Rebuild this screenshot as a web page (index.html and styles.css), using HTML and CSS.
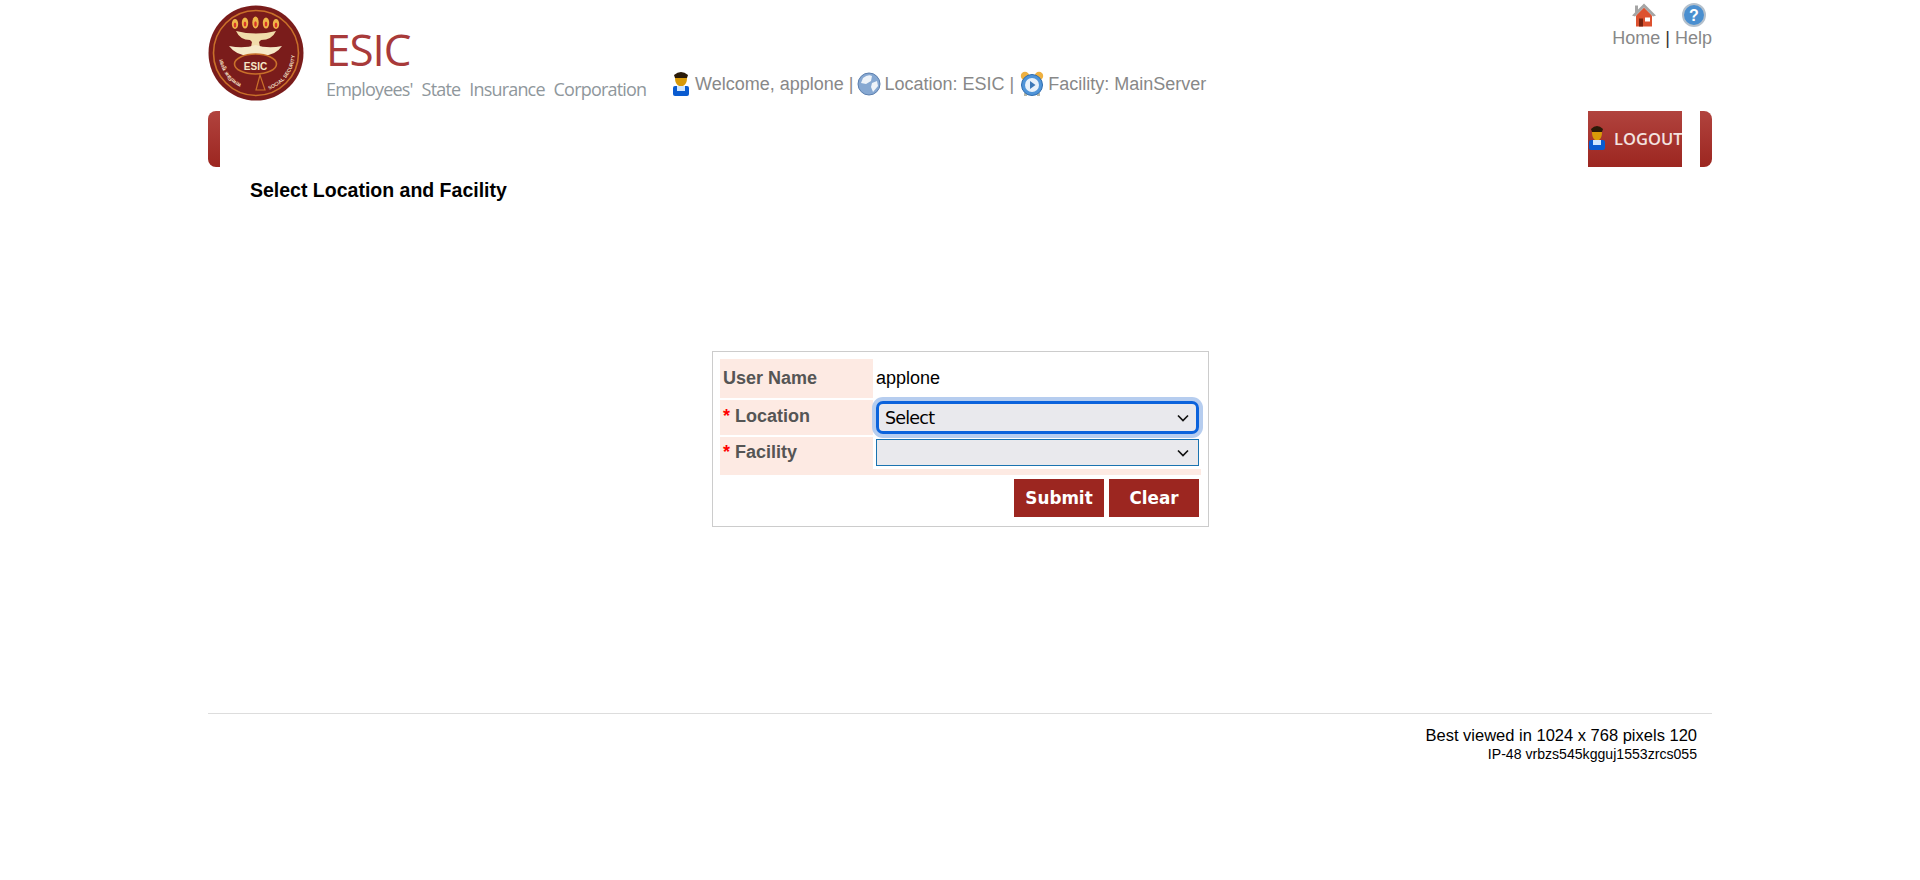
FILE: index.html
```html
<!DOCTYPE html>
<html lang="en">
<head>
<meta charset="utf-8">
<title>Select Location and Facility</title>
<link rel="stylesheet" href="styles.css">
</head>
<body>
<div class="page">
  <header class="header">
    <svg class="seal" viewBox="0 0 96 96" aria-label="ESIC seal">
      <defs>
        <path id="arcL" d="M33.5 78.8 A34 34 0 0 1 15 40"/>
        <path id="arcR" d="M61 84.8 A39 39 0 0 0 84.5 34.5"/>
      </defs>
      <circle cx="48" cy="48" r="47.5" fill="#7a1c1b"/>
      <circle cx="48" cy="48" r="42.5" fill="none" stroke="#c9702a" stroke-width="1.6"/>
      <g fill="#efb648">
        <ellipse cx="27" cy="19" rx="3.2" ry="5"/><ellipse cx="37" cy="18" rx="3.2" ry="5.5"/><ellipse cx="47.5" cy="17.5" rx="3.2" ry="6"/><ellipse cx="58" cy="18" rx="3.2" ry="5.5"/><ellipse cx="68" cy="19" rx="3.2" ry="5"/>
      </g>
      <g fill="#d8342a">
        <ellipse cx="27" cy="20" rx="1.3" ry="2.6"/><ellipse cx="37" cy="19" rx="1.3" ry="2.6"/><ellipse cx="47.5" cy="19" rx="1.3" ry="2.8"/><ellipse cx="58" cy="19" rx="1.3" ry="2.6"/><ellipse cx="68" cy="20" rx="1.3" ry="2.6"/>
      </g>
      <path d="M28 26 Q48 31 68 26 Q64 35 53 35 L51 37 L52 42 L43 42 L44 37 L42 35 Q32 35 28 26Z" fill="#f1dcaa"/>
      <path d="M21 41 Q36 44 47.5 40 Q60 44 74 41 Q66 53 47.5 50 Q30 53 21 41Z" fill="#f6e9c8"/>
      <ellipse cx="47.5" cy="59" rx="21" ry="10" fill="#7a1c1b" stroke="#c9702a" stroke-width="1.6"/>
      <text class="seal-esic" x="47.5" y="65" text-anchor="middle">ESIC</text>
      <path d="M52 70 L48 85 L57 85Z" fill="none" stroke="#c9702a" stroke-width="1.2"/>
      <text class="seal-small"><textPath href="#arcR">SOCIAL SECURITY</textPath></text>
      <text class="seal-small"><textPath href="#arcL">सामाजिक सुरक्षा</textPath></text>
    </svg>
    <div class="brand">
      <div class="brand-name">ESIC</div>
      <div class="brand-sub">Employees' State Insurance Corporation</div>
    </div>
    <div class="info">
      <svg class="ico" viewBox="0 0 24 26"><path d="M5 4 Q12 -2 19 4 L18 7 L6 7Z" fill="#2a1a08"/><path d="M6 7 H18 Q18 13 14 15 H10 Q6 13 6 7Z" fill="#d99a08"/><rect x="4" y="15" width="16" height="10" rx="2" fill="#0a5bd0"/><rect x="8" y="15" width="8" height="5" fill="#cfe6ff"/></svg>
      <span class="info-welcome">Welcome, applone |</span>
      <svg class="ico" viewBox="0 0 24 24"><circle cx="12" cy="12" r="11" fill="#86a8d2" stroke="#5c7fae"/><path d="M6 6 Q11 2 15 4 L14 9 L9 12 L4 11Z M15 11 L20 9 L21 14 L16 20 L14 15Z" fill="#eef3f9"/></svg>
      <span class="info-location">Location: ESIC |</span>
      <svg class="ico" viewBox="0 0 24 26"><circle cx="5" cy="5" r="4.2" fill="#eeb040"/><circle cx="19" cy="5" r="4.2" fill="#eeb040"/><rect x="4" y="22" width="3" height="3" fill="#b8b8a8"/><rect x="17" y="22" width="3" height="3" fill="#b8b8a8"/><circle cx="12" cy="14" r="10.5" fill="#4f94d8" stroke="#2f6cae"/><circle cx="12" cy="14" r="7" fill="#e8f1fa"/><path d="M10 10 L15.5 14 L10 18Z" fill="#3c78b8"/></svg>
      <span class="info-facility">Facility: MainServer</span>
    </div>
    <div class="top-links">
      <div class="top-icons">
        <svg class="ico" viewBox="1 1 24 23"><path d="M5 13 L13 5 L21 13 V24 H5Z" fill="#dd5230"/><path d="M13 1 L7 7 V3 H4 V10 L1 13 L4 14 L13 5 L22 14 L25 13Z" fill="#a5a5a5"/><rect x="14" y="15" width="5" height="4" fill="#fff"/><rect x="8" y="16" width="4" height="8" fill="#7a2410"/></svg>
        <svg class="ico" viewBox="0 0 24 24"><circle cx="12" cy="12" r="11" fill="#4a8fd0" stroke="#b4c0cc" stroke-width="2"/><text class="help-mark" x="12" y="18" text-anchor="middle">?</text></svg>
      </div>
      <div class="top-text"><a>Home</a> <b>|</b> <a>Help</a></div>
    </div>
  </header>

  <nav class="menu">
    <span class="cap cap-left"></span>
    <div class="logout">
      <svg class="logout-ico" viewBox="0 0 18 26"><path d="M3 4 Q9 -2 15 4 L14 7 L4 7Z" fill="#2a1a08"/><path d="M4 7 H14 Q14 13 11 15 H7 Q4 13 4 7Z" fill="#d99a08"/><rect x="1" y="15" width="16" height="10" rx="2" fill="#0a5bd0"/><rect x="5" y="15" width="8" height="5" fill="#cfe6ff"/></svg>
      <span>LOGOUT</span>
    </div>
    <span class="cap cap-right"></span>
  </nav>

  <h1 class="title">Select Location and Facility</h1>

  <main class="form-wrap">
    <form class="form-box">
      <div class="row row-user">
        <div class="label">User Name</div>
        <div class="value">applone</div>
      </div>
      <div class="row row-loc">
        <div class="label"><i>*</i> Location</div>
        <div class="value">
          <div class="select select-focus"><span>Select</span><svg class="chev" viewBox="0 0 12 8"><path d="M1 1.5 L6 6.5 L11 1.5" fill="none" stroke="#111" stroke-width="1.7"/></svg></div>
        </div>
      </div>
      <div class="row row-fac">
        <div class="label"><i>*</i> Facility</div>
        <div class="value value-top">
          <div class="select select-plain"><svg class="chev" viewBox="0 0 12 8"><path d="M1 1.5 L6 6.5 L11 1.5" fill="none" stroke="#111" stroke-width="1.7"/></svg></div>
        </div>
      </div>
      <div class="strip"></div>
      <div class="actions">
        <button type="button" class="btn">Submit</button>
        <button type="button" class="btn">Clear</button>
      </div>
    </form>
  </main>

  <footer class="footer">
    <div class="best">Best viewed in 1024 x 768 pixels 120</div>
    <div class="ip">IP-48 vrbzs545kgguj1553zrcs055</div>
  </footer>
</div>
</body>
</html>
```
FILE: styles.css
```css
* { box-sizing: border-box; }
html, body { margin: 0; padding: 0; background: #fff; }
body { font-family: "Liberation Sans", Arial, sans-serif; color: #000; }
.page { width: 1504px; margin: 0 auto; height: 880px; }

.header { display: flex; height: 111px; align-items: flex-start; }
.seal { width: 96px; height: 96px; margin-top: 5px; flex: none; }
.seal-esic { font: bold 10px "Liberation Sans", sans-serif; fill: #f6e9c8; }
.seal-small { font: bold 5px "Liberation Sans", "Noto Sans", sans-serif; fill: #f0dfc0; }
.brand { margin-left: 22px; width: 343px; flex: none; padding-top: 24px; }
.brand-name { font: 400 44px/50px "Open Sans", sans-serif; color: #a83a3a; letter-spacing: -1px; }
.brand-sub { font: 400 18px/26px "Open Sans", sans-serif; color: #8f979c; letter-spacing: -0.81px; word-spacing: 5px; white-space: nowrap; margin-top: 2px; }
.info { display: flex; align-items: center; gap: 3px; padding-top: 71px; font-size: 18px; color: #888; white-space: nowrap; }
.info .ico { width: 24px; height: 26px; flex: none; }
.info-welcome { margin: 0 1px 0 -1px; }
.info-location { margin-right: 3px; }
.info-facility { margin-left: 1px; }
.top-links { margin-left: auto; display: flex; flex-direction: column; align-items: flex-end; padding-top: 3px; }
.top-icons { display: flex; gap: 26px; padding-right: 6px; }
.top-icons .ico { width: 24px; height: 24px; }
.help-mark { font: bold 16px "Liberation Sans", sans-serif; fill: #fff; }
.top-text { font-size: 18px; line-height: 21px; color: #888; white-space: nowrap; margin-top: 1px; }
.top-text b { font-weight: 400; color: #333; }

.menu { display: flex; height: 56px; align-items: stretch; }
.cap { width: 12px; background: linear-gradient(#b1433e, #9c2620); }
.cap-left { border-radius: 8px 0 0 8px; }
.cap-right { border-radius: 0 8px 8px 0; margin-left: 18px; }
.logout { margin-left: auto; width: 94px; display: flex; align-items: center; gap: 8px; color: #f3e3e0; background: linear-gradient(#b1433e, #9c2620); font: 600 16.5px "Open Sans", sans-serif; white-space: nowrap; overflow: hidden; }
.logout span { padding-bottom: 1px; }
.logout-ico { width: 18px; height: 26px; flex: none; margin-top: -2px; }

.title { margin: 10px 0 0 42px; font-size: 19.5px; line-height: 27px; font-weight: 700; height: 27px; }

.form-wrap { display: flex; justify-content: center; padding: 147px 0 0 1px; height: 509px; }
.form-box { width: 497px; height: 176px; border: 1px solid #ccc; padding: 7px 7px 0 7px; align-self: flex-start; }
.row { display: flex; margin-bottom: 2px; }
.row-user { height: 39px; }
.row-loc { height: 35px; }
.row-fac { height: 32px; }
.label { width: 153px; background: #fdeae3; color: #555; font-weight: 700; font-size: 18px; padding-left: 3px; display: flex; align-items: center; gap: 5px; flex: none; }
.row-loc .label, .row-fac .label { padding-bottom: 2px; }
.label i { color: #f00; font-style: normal; font-size: 18px; }
.value { flex: 1; padding-left: 3px; font-size: 18px; display: flex; align-items: center; }
.value-top { align-items: flex-start; padding-top: 2px; }
.select { position: relative; width: 323px; background: #e9e9ed; display: flex; align-items: center; font-size: 17.5px; font-family: "DejaVu Sans", sans-serif; }
.select-focus { height: 33px; border: 3px solid #0b63dc; border-radius: 7px; box-shadow: 0 0 0 4px #b6cdef; padding-left: 6px; letter-spacing: -0.8px; }
.select-plain { height: 27px; border: 1px solid #1a73b0; }
.chev { width: 12px; height: 8px; position: absolute; right: 9px; top: 50%; margin-top: -4px; }
.select-focus .chev { right: 7px; }
.strip { height: 6px; background: #fdeae3; margin-top: -2px; }
.actions { display: flex; justify-content: flex-end; gap: 5px; padding: 4px 2px 0 0; }
.btn { width: 90px; height: 38px; border: 0; background: #9c2620; color: #fff; font: 700 16.8px "DejaVu Sans", sans-serif; padding: 0; }

.footer { border-top: 1px solid #ddd; padding: 11px 15px 0 0; text-align: right; }
.best { font-size: 16.5px; line-height: 20px; }
.ip { font-size: 14.1px; line-height: 18px; }
```
